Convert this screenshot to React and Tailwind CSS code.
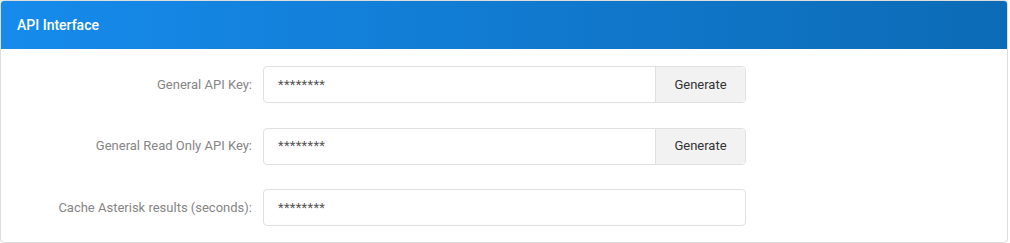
import React from "react";

const rows = [
  { label: "General API Key:", button: true },
  { label: "General Read Only API Key:", button: true },
  { label: "Cache Asterisk results (seconds):", button: false },
];

export default function App() {
  return (
    <div className="w-[1010px] h-[243px] bg-white" style={{ fontFamily: "Roboto, 'Liberation Sans', sans-serif" }}>
      <div className="w-[1008px] border border-[#dddddd] rounded-[4px] overflow-hidden bg-white">
        <div className="h-[48px] flex items-center px-4 bg-gradient-to-r from-[#168bec] to-[#0c6bb6] text-white text-[14px] font-medium">
          API Interface
        </div>
        <div className="pt-[17px] pb-[16px] flex flex-col gap-[24.5px]">
          {rows.map((r) => (
            <div key={r.label} className="flex items-center">
              <div className="w-[252px] text-right text-[13px] text-[#858585] pr-px">{r.label}</div>
              <div className="ml-[10px] w-[483px] h-[37px] flex border border-[#e0e0e0] rounded-[4px] overflow-hidden">
                <div className="flex-1 flex items-center pl-[14px] text-[13px] text-[#555555] tracking-[0.3px]">********</div>
                {r.button && (
                  <div className="w-[90px] flex items-center justify-center bg-[#f2f2f2] border-l border-[#e0e0e0] text-[13px] text-[#333333]">
                    Generate
                  </div>
                )}
              </div>
            </div>
          ))}
        </div>
      </div>
    </div>
  );
}
